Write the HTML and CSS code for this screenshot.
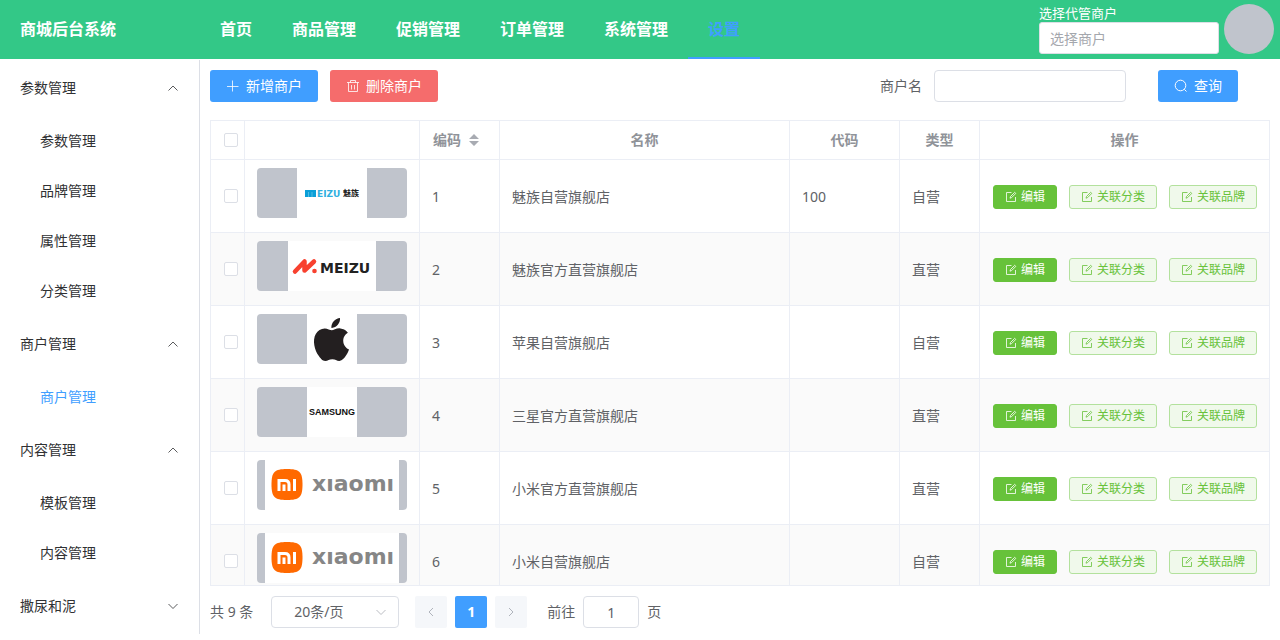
FILE: index.html
```html
<!DOCTYPE html>
<html lang="zh-CN">
<head>
<meta charset="utf-8">
<meta name="viewport" content="width=device-width, initial-scale=1">
<title>商城后台系统</title>
<link rel="stylesheet" href="styles.css">
</head>
<body>
<svg class="sprite" aria-hidden="true">
  <symbol id="up" viewBox="0 0 12 12"><path d="M1.500 8.500 6 4l4.500 4.500" fill="none" stroke="currentColor" stroke-width=".8"/></symbol>
  <symbol id="down" viewBox="0 0 12 12"><path d="M1.500 4 6 8.500 10.500 4" fill="none" stroke="currentColor" stroke-width=".8"/></symbol>
  <symbol id="left" viewBox="0 0 12 12"><path d="M8 2 4 6l4 4" fill="none" stroke="currentColor"/></symbol>
  <symbol id="right" viewBox="0 0 12 12"><path d="m4 2 4 4-4 4" fill="none" stroke="currentColor"/></symbol>
  <symbol id="plus" viewBox="0 0 14 14"><path d="M6.500 1.500v11M1 7.500h11.500" fill="none" stroke="currentColor" stroke-width=".8"/></symbol>
  <symbol id="trash" viewBox="0 0 14 14"><path d="M1 3.500h12M4.500 3.500v-2h5v2M2.500 3.500v9h9v-9M5.500 6v4.500M8.500 6v4.500" fill="none" stroke="currentColor" stroke-width=".8"/></symbol>
  <symbol id="search" viewBox="0 0 14 14"><circle cx="6.500" cy="6.500" r="5.300" fill="none" stroke="currentColor"/><path d="m10.300 10.300 2.200 2.200" stroke="currentColor"/></symbol>
  <symbol id="edit" viewBox="0 0 12 12"><path d="M6.500 1.500h-5v9h9v-4.500M5 7.200l.5-1.700 4.200-4.200 1.100 1.100L6.600 6.600z" fill="none" stroke="currentColor" stroke-width=".8"/></symbol>
  <symbol id="xiaomi" viewBox="0 0 150 50">
    <path fill="#fff" d="M8 0h134v50H8z"/>
    <path fill="#ff6900" d="M30 9c12.500 0 15.500 3 15.500 15.500S42.500 40 30 40 14.500 37 14.500 24.500 17.500 9 30 9z"/>
    <path d="M22 31V20.500h6q4 0 4 4V31M27 24.500V31M37.500 19v12" fill="none" stroke="#fff" stroke-width="3"/>
    <text x="55" y="31" class="mark-xiaomi">xıaomı</text>
  </symbol>
</svg>

<header class="topbar">
  <h1 class="brand">商城后台系统</h1>
  <nav class="topnav" aria-label="主导航">
    <a href="#">首页</a><a href="#">商品管理</a><a href="#">促销管理</a><a href="#">订单管理</a><a href="#">系统管理</a><a href="#" class="active" aria-current="page">设置</a>
  </nav>
  <div class="account">
    <div class="agent">
      <label for="agent">选择代管商户</label>
      <input id="agent" class="field" type="text" placeholder="选择商户">
    </div>
    <span class="avatar"></span>
  </div>
</header>

<div class="layout">
  <nav class="sidebar" aria-label="侧边导航">
    <button class="group" type="button">参数管理<svg><use href="#up"/></svg></button>
    <a href="#">参数管理</a>
    <a href="#">品牌管理</a>
    <a href="#">属性管理</a>
    <a href="#">分类管理</a>
    <button class="group" type="button">商户管理<svg><use href="#up"/></svg></button>
    <a href="#" class="active" aria-current="page">商户管理</a>
    <button class="group" type="button">内容管理<svg><use href="#up"/></svg></button>
    <a href="#">模板管理</a>
    <a href="#">内容管理</a>
    <button class="group" type="button">撒尿和泥<svg><use href="#down"/></svg></button>
  </nav>

  <main class="main">
    <div class="toolbar">
      <button class="btn primary" type="button"><svg><use href="#plus"/></svg>新增商户</button>
      <button class="btn danger" type="button"><svg><use href="#trash"/></svg>删除商户</button>
      <form class="search">
        <label for="name">商户名</label>
        <input id="name" class="field" type="text">
        <button class="btn primary" type="button"><svg><use href="#search"/></svg>查询</button>
      </form>
    </div>

    <div class="table-wrap">
      <table>
        <colgroup><col class="c-check"><col class="c-logo"><col class="c-code"><col class="c-name"><col class="c-alias"><col class="c-type"><col class="c-ops"></colgroup>
        <thead>
          <tr>
            <th class="check"><input type="checkbox" aria-label="全选"></th>
            <th></th>
            <th class="sortable">编码<svg class="sort" viewBox="0 0 10 12"><path d="M5 0l5 5H0zM5 12l5-5H0z" fill="currentColor"/></svg></th>
            <th>名称</th><th>代码</th><th>类型</th><th>操作</th>
          </tr>
        </thead>
        <tbody>
          <tr>
            <td class="check"><input type="checkbox" aria-label="选择 1"></td>
            <td class="logo"><svg viewBox="0 0 150 50" role="img" aria-label="魅族"><path fill="#fff" d="M40 0h70v50H40z"/><path fill="#0a9fd8" d="M48 22h11v7H48z"/><path d="M51.500 24v5M55 24v5" stroke="#7fd0ee" stroke-width=".6"/><text x="60" y="29" class="mark-blue">EIZU</text><text x="86" y="28" class="mark-cn">魅族</text></svg></td>
            <td>1</td><td>魅族自营旗舰店</td><td>100</td><td>自营</td>
            <td class="ops"><div><button class="mini solid" type="button"><svg><use href="#edit"/></svg>编辑</button><button class="mini" type="button"><svg><use href="#edit"/></svg>关联分类</button><button class="mini" type="button"><svg><use href="#edit"/></svg>关联品牌</button></div></td>
          </tr>
          <tr>
            <td class="check"><input type="checkbox" aria-label="选择 2"></td>
            <td class="logo"><svg viewBox="0 0 150 50" role="img" aria-label="MEIZU"><path fill="#fff" d="M31 0h88v50H31z"/><path d="M38 30.500 47.500 20.500v9L57 20.500" fill="none" stroke="#f8412f" stroke-width="4.500" stroke-linecap="round" stroke-linejoin="round"/><circle cx="57.500" cy="30" r="2.300" fill="#f8412f"/><text x="63" y="32" class="mark-meizu">MEIZU</text></svg></td>
            <td>2</td><td>魅族官方直营旗舰店</td><td></td><td>直营</td>
            <td class="ops"><div><button class="mini solid" type="button"><svg><use href="#edit"/></svg>编辑</button><button class="mini" type="button"><svg><use href="#edit"/></svg>关联分类</button><button class="mini" type="button"><svg><use href="#edit"/></svg>关联品牌</button></div></td>
          </tr>
          <tr>
            <td class="check"><input type="checkbox" aria-label="选择 3"></td>
            <td class="logo"><svg viewBox="0 0 150 50" role="img" aria-label="苹果"><path fill="#fff" d="M50 0h50v50H50z"/><path transform="translate(53 4) scale(1.790)" fill="#231f20" d="M12.152 6.896c-.948 0-2.415-1.078-3.960-1.040-2.040.027-3.910 1.183-4.961 3.014-2.117 3.675-.546 9.103 1.519 12.090 1.013 1.454 2.208 3.090 3.792 3.039 1.520-.065 2.090-.987 3.935-.987 1.831 0 2.350.987 3.960.948 1.637-.026 2.676-1.480 3.676-2.948 1.156-1.688 1.636-3.325 1.662-3.415-.039-.013-3.182-1.221-3.220-4.857-.026-3.040 2.480-4.494 2.597-4.559-1.429-2.090-3.623-2.324-4.390-2.376-2-.156-3.675 1.090-4.610 1.090zM15.530 3.830c.843-1.012 1.400-2.427 1.245-3.830-1.207.052-2.662.805-3.532 1.818-.780.896-1.454 2.338-1.273 3.714 1.338.104 2.715-.688 3.559-1.701"/></svg></td>
            <td>3</td><td>苹果自营旗舰店</td><td></td><td>自营</td>
            <td class="ops"><div><button class="mini solid" type="button"><svg><use href="#edit"/></svg>编辑</button><button class="mini" type="button"><svg><use href="#edit"/></svg>关联分类</button><button class="mini" type="button"><svg><use href="#edit"/></svg>关联品牌</button></div></td>
          </tr>
          <tr>
            <td class="check"><input type="checkbox" aria-label="选择 4"></td>
            <td class="logo"><svg viewBox="0 0 150 50" role="img" aria-label="SAMSUNG"><path fill="#fff" d="M50 0h50v50H50z"/><text x="75" y="28" text-anchor="middle" class="mark-samsung">SAMSUNG</text></svg></td>
            <td>4</td><td>三星官方直营旗舰店</td><td></td><td>直营</td>
            <td class="ops"><div><button class="mini solid" type="button"><svg><use href="#edit"/></svg>编辑</button><button class="mini" type="button"><svg><use href="#edit"/></svg>关联分类</button><button class="mini" type="button"><svg><use href="#edit"/></svg>关联品牌</button></div></td>
          </tr>
          <tr>
            <td class="check"><input type="checkbox" aria-label="选择 5"></td>
            <td class="logo"><svg viewBox="0 0 150 50" role="img" aria-label="xiaomi"><use href="#xiaomi"/></svg></td>
            <td>5</td><td>小米官方直营旗舰店</td><td></td><td>直营</td>
            <td class="ops"><div><button class="mini solid" type="button"><svg><use href="#edit"/></svg>编辑</button><button class="mini" type="button"><svg><use href="#edit"/></svg>关联分类</button><button class="mini" type="button"><svg><use href="#edit"/></svg>关联品牌</button></div></td>
          </tr>
          <tr>
            <td class="check"><input type="checkbox" aria-label="选择 6"></td>
            <td class="logo"><svg viewBox="0 0 150 50" role="img" aria-label="xiaomi"><use href="#xiaomi"/></svg></td>
            <td>6</td><td>小米自营旗舰店</td><td></td><td>自营</td>
            <td class="ops"><div><button class="mini solid" type="button"><svg><use href="#edit"/></svg>编辑</button><button class="mini" type="button"><svg><use href="#edit"/></svg>关联分类</button><button class="mini" type="button"><svg><use href="#edit"/></svg>关联品牌</button></div></td>
          </tr>
        </tbody>
      </table>
    </div>

    <div class="pagination">
      <span>共 9 条</span>
      <div class="size">
        <select class="field" aria-label="每页条数"><option>20条/页</option></select>
        <svg><use href="#down"/></svg>
      </div>
      <div class="pages">
        <button type="button" aria-label="上一页" disabled><svg><use href="#left"/></svg></button>
        <button type="button" class="current" aria-current="page">1</button>
        <button type="button" aria-label="下一页" disabled><svg><use href="#right"/></svg></button>
      </div>
      <label class="jump">前往<input class="field" type="text" value="1">页</label>
    </div>
  </main>
</div>
</body>
</html>
```

FILE: styles.css
```css
* { box-sizing: border-box; }

body {
  margin: 0;
  height: 100vh;
  display: flex;
  flex-direction: column;
  overflow: hidden;
  background: #fff;
  color: #606266;
  font: 14px/20px "Noto Sans", "Noto Sans CJK SC", sans-serif;
}

button, input, select { font: inherit; color: inherit; margin: 0; }
button { border: 0; background: none; padding: 0; cursor: pointer; }
a { color: inherit; text-decoration: none; }
.sprite { display: none; }

.field {
  height: 32px;
  padding: 0 10px;
  border: 1px solid #dcdfe6;
  border-radius: 4px;
  background: #fff;
  outline: 0;
}
.field::placeholder { color: #a4a7ad; opacity: 1; }

/* Top bar */
.topbar {
  flex: none;
  display: flex;
  border-bottom: 1px solid #fff;
  background: #33c887;
  background-clip: padding-box;
  color: #fff;
}
.brand {
  width: 200px;
  margin: 0;
  padding-left: 20px;
  font-size: 16px;
  line-height: 59px;
}
.topnav { display: flex; font-size: 16px; font-weight: 700; }
.topnav a { padding: 0 20px; height: 59px; line-height: 59px; }
.topnav .active { color: #409eff; border-bottom: 2px solid #409eff; }
.account { display: flex; gap: 5px; margin-left: auto; padding: 4px 6px 0 0; }
.agent { display: flex; flex-direction: column; width: 180px; font-size: 13px; line-height: 18px; }
.agent .field { width: 100%; font-size: 14px; border-radius: 3px; }
.avatar { width: 50px; height: 50px; border-radius: 50%; background: #c0c4cc; }

/* Sidebar */
.layout { flex: 1; display: flex; min-height: 0; align-items: flex-start; }
.sidebar { flex: none; width: 200px; border-right: 1px solid #dcdfe6; color: #303133; }
.sidebar a { display: block; padding-left: 40px; line-height: 50px; }
.sidebar .active { color: #409eff; }
.group {
  display: flex;
  align-items: center;
  justify-content: space-between;
  width: 100%;
  height: 56px;
  padding: 0 20px;
}
.group svg { width: 12px; height: 12px; }

/* Content */
.main {
  flex: 1;
  min-width: 0;
  height: 100%;
  display: flex;
  flex-direction: column;
  padding: 10px 10px 12px;
}
.toolbar { display: flex; gap: 12px; margin-bottom: 18px; }
.search { display: flex; align-items: center; margin-left: auto; padding-right: 32px; }
.search .field { width: 192px; margin: 0 32px 0 12px; }
.btn {
  display: flex;
  align-items: center;
  gap: 6px;
  height: 32px;
  padding: 0 16px;
  border-radius: 3px;
  color: #fff;
}
.btn svg { width: 14px; height: 14px; }
.primary { background: #409eff; }
.danger { background: #f56c6c; }

/* Table */
.table-wrap {
  flex: 1;
  min-height: 0;
  overflow: hidden;
  border: 1px solid #ebeef5;
  border-right: 0;
}
table { width: 100%; table-layout: fixed; border-spacing: 0; }
.c-check { width: 34px; }
.c-logo { width: 175px; }
.c-code, .c-type { width: 80px; }
.c-alias { width: 110px; }
.c-ops { width: 290px; }
th, td {
  padding: 0 12px;
  border: solid #ebeef5;
  border-width: 0 1px 1px 0;
  text-align: left;
}
th { height: 39px; color: #909399; text-align: center; }
td { height: 73px; padding-top: 2px; }
tbody tr:nth-child(even) { background: #fafafa; }
th.sortable { padding-left: 13px; text-align: left; }
.sort { width: 10px; height: 12px; margin-left: 8px; vertical-align: -1px; color: #a8abb2; }
th.check, td.check { padding: 0 0 0 13px; }
.check input {
  appearance: none;
  display: block;
  width: 14px;
  height: 14px;
  border: 1px solid #dcdfe6;
  border-radius: 2px;
  background: #fff;
}
.check input:checked { background: #409eff; border-color: #409eff; }
td.logo { padding: 8px 12px 14px; }
.logo svg { display: block; width: 150px; height: 50px; border-radius: 4px; background: #c0c4cc; }
.mark-blue { font: 700 9px "DejaVu Sans", sans-serif; fill: #2fb0e0; }
.mark-cn { font: 700 8px "Noto Sans CJK SC", sans-serif; fill: #222; }
.mark-meizu { font: 700 14px "DejaVu Sans", sans-serif; fill: #222; }
.mark-samsung { font: 700 9px "Liberation Sans", sans-serif; fill: #111; }
.mark-xiaomi { font: 700 22px "DejaVu Sans", sans-serif; fill: #868686; }
.ops div { display: flex; justify-content: flex-end; gap: 12px; }
td.ops { padding: 2px 12px 0 0; }
.mini {
  display: flex;
  align-items: center;
  gap: 4px;
  height: 24px;
  padding: 0 11px;
  border: 1px solid #b3e19d;
  border-radius: 3px;
  background: #f0f9eb;
  color: #67c23a;
  font-size: 12px;
}
.mini svg { width: 12px; height: 12px; }
.solid { border-color: #67c23a; background: #67c23a; color: #fff; }

/* Pagination */
.pagination { display: flex; align-items: center; margin-top: 10px; }
.size { position: relative; margin: 0 16px 0 18px; }
.size .field { appearance: none; width: 128px; padding-left: 22px; }
.size svg { position: absolute; top: 10px; right: 12px; width: 12px; height: 12px; color: #a8abb2; pointer-events: none; }
.pages { display: flex; gap: 8px; }
.pages button {
  display: grid;
  place-items: center;
  width: 32px;
  height: 32px;
  border-radius: 2px;
  background: #f5f7fa;
  color: #b0b4bc;
}
.pages svg { width: 12px; height: 12px; }
.pages .current { background: #409eff; color: #fff; font-weight: 700; }
.jump { display: flex; align-items: center; gap: 8px; margin-left: 20px; }
.jump .field { width: 56px; text-align: center; }
```
